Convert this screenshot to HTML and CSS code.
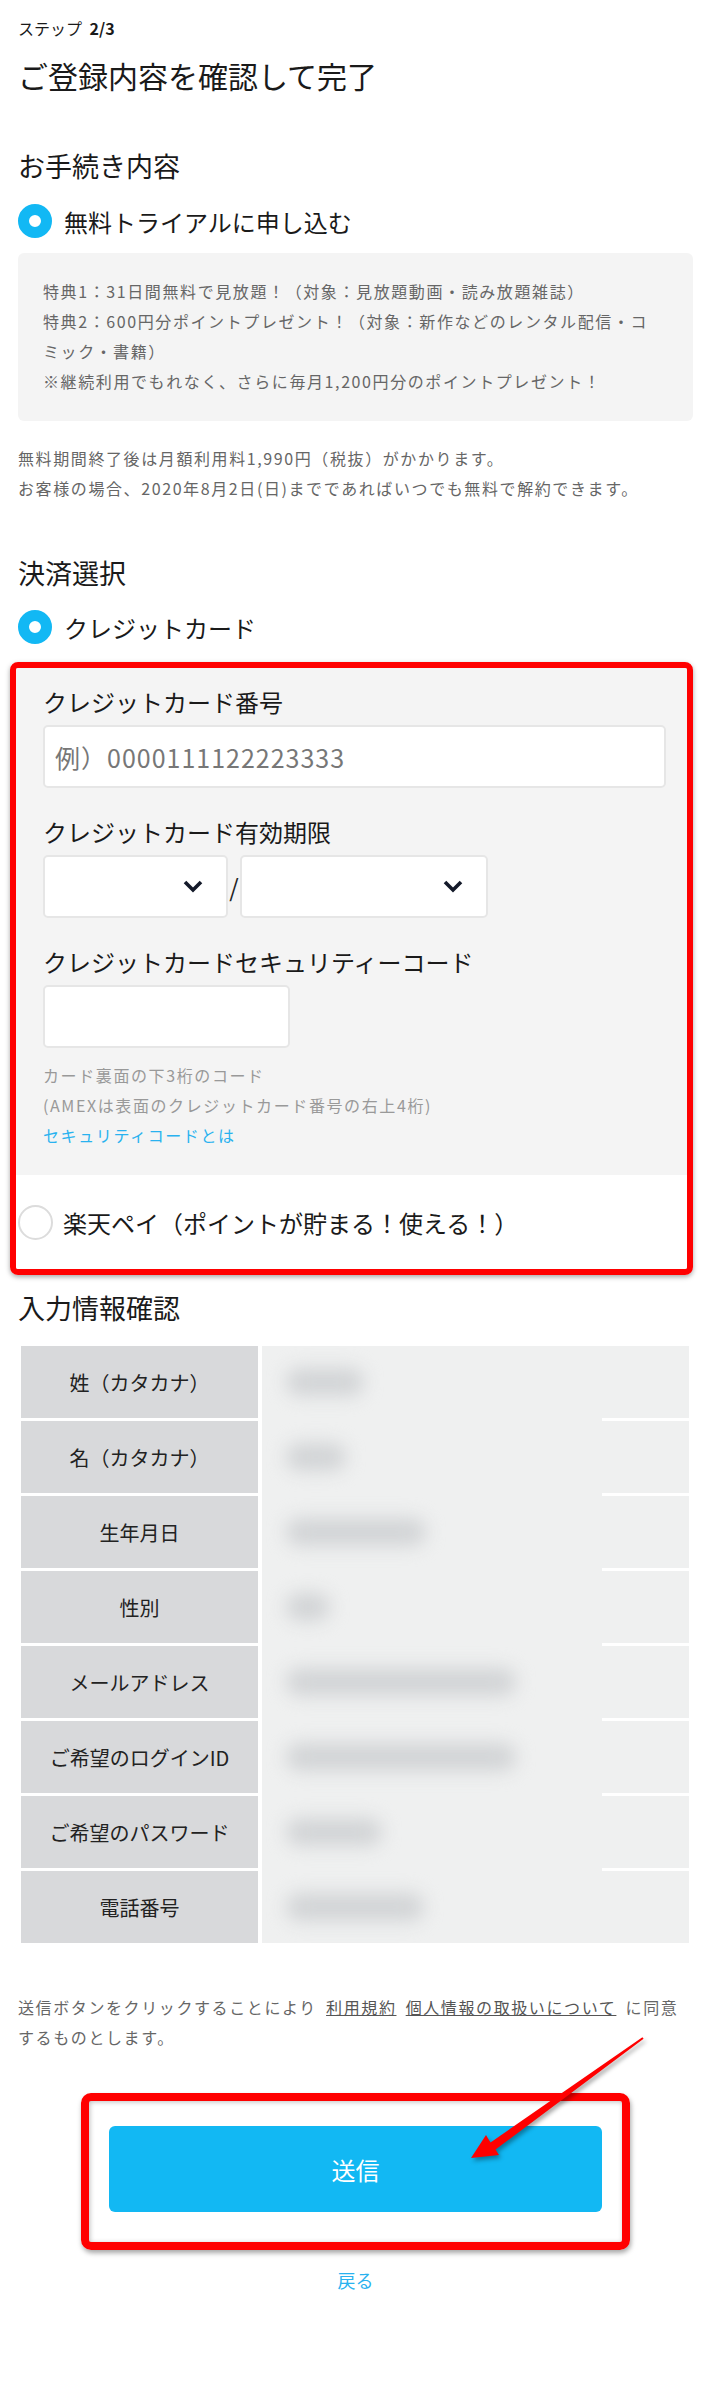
FILE: index.html
```html
<!DOCTYPE html>
<html lang="ja">
<head>
  <meta charset="UTF-8">
  <title>ご登録内容を確認して完了</title>
  <link rel="stylesheet" href="styles.css">
</head>
<body>
  <div class="page">
    <p class="step">ステップ <b>2/3</b></p>
    <h1 class="title">ご登録内容を確認して完了</h1>

    <!-- お手続き内容 -->
    <h2 class="sec-title">お手続き内容</h2>
    <div class="radio-row">
      <span class="radio checked"></span>
      <span>無料トライアルに申し込む</span>
    </div>
    <div class="info-box">
      特典1：31日間無料で見放題！（対象：見放題動画・読み放題雑誌）<br>
      特典2：600円分ポイントプレゼント！（対象：新作などのレンタル配信・コミック・書籍）<br>
      ※継続利用でもれなく、さらに毎月1,200円分のポイントプレゼント！
    </div>
    <p class="notice">
      無料期間終了後は月額利用料1,990円（税抜）がかかります。<br>
      お客様の場合、2020年8月2日(日)までであればいつでも無料で解約できます。
    </p>

    <!-- 決済選択 -->
    <h2 class="sec-title pay-title">決済選択</h2>
    <div class="radio-row pay-radio">
      <span class="radio checked"></span>
      <span>クレジットカード</span>
    </div>

    <div class="mark mark-card">
      <div class="card-form">
        <div class="field-label">クレジットカード番号</div>
        <input class="text-input" type="text" placeholder="例）0000111122223333">

        <div class="field-label gap">クレジットカード有効期限</div>
        <div class="select-row">
          <div class="select month">
            <svg width="20" height="13" viewBox="0 0 20 13"><polyline points="2,2 10,10 18,2" fill="none" stroke="#141a2a" stroke-width="3.6"/></svg>
          </div>
          <span class="slash">/</span>
          <div class="select year">
            <svg width="20" height="13" viewBox="0 0 20 13"><polyline points="2,2 10,10 18,2" fill="none" stroke="#141a2a" stroke-width="3.6"/></svg>
          </div>
        </div>

        <div class="field-label gap">クレジットカードセキュリティーコード</div>
        <input class="text-input cvc" type="text">

        <div class="hint">
          カード裏面の下3桁のコード<br>
          (AMEXは表面のクレジットカード番号の右上4桁)<br>
          <a class="hint-link" href="#">セキュリティコードとは</a>
        </div>
      </div>
      <div class="rakuten-row">
        <span class="radio"></span>
        <span>楽天ペイ（ポイントが貯まる！使える！）</span>
      </div>
    </div>

    <!-- 入力情報確認 -->
    <h2 class="sec-title confirm-title">入力情報確認</h2>
    <div class="confirm-table">
      <div class="blur-patch"></div>
      <div class="cell-label">姓（カタカナ）</div>
      <div class="cell-value"><span class="blob" style="width:78px"></span></div>
      <div class="cell-label">名（カタカナ）</div>
      <div class="cell-value"><span class="blob" style="width:60px"></span></div>
      <div class="cell-label">生年月日</div>
      <div class="cell-value"><span class="blob" style="width:140px"></span></div>
      <div class="cell-label">性別</div>
      <div class="cell-value"><span class="blob" style="width:44px"></span></div>
      <div class="cell-label">メールアドレス</div>
      <div class="cell-value"><span class="blob" style="width:230px"></span></div>
      <div class="cell-label">ご希望のログインID</div>
      <div class="cell-value"><span class="blob" style="width:230px"></span></div>
      <div class="cell-label">ご希望のパスワード</div>
      <div class="cell-value"><span class="blob" style="width:96px"></span></div>
      <div class="cell-label">電話番号</div>
      <div class="cell-value"><span class="blob" style="width:138px"></span></div>
    </div>

    <p class="consent">送信ボタンをクリックすることにより <a href="#">利用規約</a> <a href="#">個人情報の取扱いについて</a> に同意するものとします。</p>

    <div class="mark mark-cta">
      <button class="submit-btn" type="button">送信</button>
      <svg class="arrow" width="200" height="150" viewBox="0 0 200 150">
        <polygon points="12,132 27,109 31.5,116.5 183.4,11.2 184.6,12.8 36.5,123.5 40,129" fill="#ff0000"/>
      </svg>
    </div>

    <a class="back" href="#">戻る</a>
  </div>
</body>
</html>
```

FILE: styles.css
```css
body {
  margin: 0;
  background: #fff;
  font-family: "Noto Sans CJK JP", "Noto Sans", sans-serif;
  color: #1a1a1a;
}

.page {
  padding: 16px 18px 80px;
}

.step {
  margin: 0;
  font-size: 16px;
  line-height: 24px;
}

.step b {
  margin-left: 4px;
  font-weight: 700;
}

.title {
  margin: 15px 0 0;
  font-size: 30px;
  line-height: 40px;
  font-weight: 400;
}

.sec-title {
  margin: 53px 0 0;
  font-size: 27px;
  line-height: 36px;
  font-weight: 400;
}

.pay-title {
  margin-top: 52px;
}

.confirm-title {
  margin-top: 15px;
}

/* ラジオ */
.radio-row {
  display: flex;
  align-items: center;
  gap: 12px;
  height: 36px;
  margin-top: 19px;
  font-size: 24px;
}

.pay-radio {
  margin-top: 18px;
}

.radio {
  flex: none;
  width: 35px;
  height: 35px;
  box-sizing: border-box;
  border: 2px solid #dcdcdc;
  border-radius: 50%;
  background: #fff;
}

.radio.checked {
  width: 34px;
  height: 34px;
  border: 11px solid #12b8f4;
}

/* 特典 */
.info-box {
  margin-top: 14px;
  padding: 23px 30px 25px 25px;
  background: #f4f4f4;
  border-radius: 6px;
  font-size: 16px;
  line-height: 30px;
  letter-spacing: 0.1em;
  color: #666;
}

.notice {
  margin: 22px 0 0;
  font-size: 16px;
  line-height: 30px;
  letter-spacing: 0.1em;
  color: #666;
}

/* 注釈の赤枠 */
.mark {
  border: 6px solid #ff0000;
  border-radius: 8px;
  box-shadow: 0 2px 5px rgba(0,0,0,0.35), inset 0 0 6px rgba(0,0,0,0.28);
}

.mark-card {
  margin: 17px 0 0 -8px;
  overflow: hidden;
}

.card-form {
  padding: 18px 21px 25px 27px;
  background: #f4f4f4;
}

.field-label {
  font-size: 24px;
  line-height: 32px;
}

.field-label.gap {
  margin-top: 28px;
}

.text-input {
  display: block;
  width: 100%;
  height: 63px;
  margin-top: 7px;
  padding: 0 10px;
  box-sizing: border-box;
  border: 2px solid #e6e6e6;
  border-radius: 5px;
  background: #fff;
  font-family: inherit;
  font-size: 25px;
  letter-spacing: 0.04em;
}

.text-input::placeholder {
  color: #777;
}

.text-input.cvc {
  width: 247px;
}

.select-row {
  display: flex;
  align-items: center;
  margin-top: 7px;
}

.select {
  display: flex;
  align-items: center;
  justify-content: flex-end;
  height: 63px;
  padding-right: 23px;
  box-sizing: border-box;
  border: 2px solid #e6e6e6;
  border-radius: 5px;
  background: #fff;
}

.select.month {
  width: 185px;
}

.select.year {
  width: 248px;
}

.slash {
  width: 12px;
  text-align: center;
  font-size: 24px;
  color: #222;
}

.hint {
  margin-top: 12px;
  font-size: 16px;
  line-height: 30px;
  letter-spacing: 0.1em;
  color: #999;
}

.hint-link {
  color: #29b2ef;
  text-decoration: none;
}

.rakuten-row {
  display: flex;
  align-items: center;
  gap: 10px;
  height: 94px;
  padding-left: 2px;
  background: #fff;
  font-size: 24px;
}

/* 入力情報確認 */
.confirm-table {
  position: relative;
  display: grid;
  grid-template-columns: 237px 1fr;
  grid-auto-rows: 72px;
  column-gap: 4px;
  row-gap: 3px;
  margin: 20px 4px 0 3px;
}

.cell-label {
  display: flex;
  align-items: center;
  justify-content: center;
  background: #d8d9db;
  font-size: 20px;
  color: #222;
}

.cell-value {
  display: flex;
  align-items: center;
  background: #eff0f0;
}

.blur-patch {
  position: absolute;
  left: 241px;
  top: 12px;
  width: 340px;
  bottom: 10px;
  background: #eff0f0;
}

.blob {
  position: relative;
  z-index: 1;
  display: block;
  height: 28px;
  margin-left: 24px;
  border-radius: 14px;
  background: #d2d4d6;
  filter: blur(9px);
}

/* 同意・送信 */
.consent {
  margin: 49px 0 0;
  font-size: 16px;
  line-height: 30px;
  letter-spacing: 0.1em;
  word-spacing: 4px;
  color: #666;
}

.consent a {
  color: #555;
  text-decoration: underline;
}

.mark-cta {
  position: relative;
  width: 549px;
  margin: 41px auto 0;
  padding: 25px 20px 30px;
  box-sizing: border-box;
  border-width: 8px;
  border-radius: 10px;
  box-shadow: 1px 3px 5px rgba(0,0,0,0.35), inset 1px 1px 5px rgba(0,0,0,0.25);
}

.submit-btn {
  display: block;
  width: 100%;
  height: 86px;
  border: none;
  border-radius: 6px;
  background: #12b8f3;
  color: #fff;
  font-family: inherit;
  font-size: 24px;
}

.arrow {
  position: absolute;
  left: 370px;
  top: -75px;
  filter: drop-shadow(2px 3px 2px rgba(0,0,0,0.35));
}

.back {
  display: block;
  margin-top: 18px;
  text-align: center;
  font-size: 18px;
  line-height: 24px;
  color: #29b2ef;
  text-decoration: none;
}
```
